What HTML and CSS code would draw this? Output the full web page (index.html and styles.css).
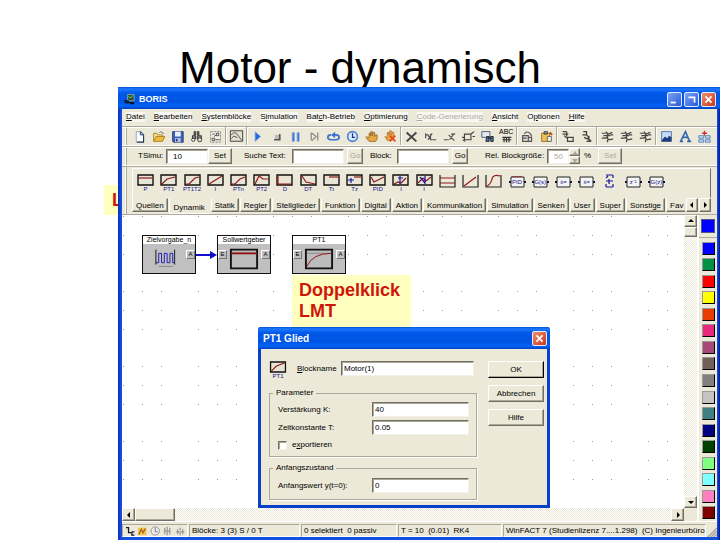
FILE: index.html
```
<!DOCTYPE html>
<html lang="de">
<head>
<meta charset="utf-8">
<title>Motor - dynamisch</title>
<link rel="stylesheet" href="styles.css">
</head>
<body>
<svg class="defs" aria-hidden="true">
  <symbol id="new" viewBox="0 0 16 16"><path d="M4 2h5l4 4v9H4z" fill="#fff" stroke="#8a9ab8"/><path d="M9 2l4 4v9H5" fill="none" stroke="#203860" stroke-width="1.4"/><path d="M9 2v4h4" fill="#9cc0e8" stroke="#203860"/></symbol>
  <symbol id="open" viewBox="0 0 16 16"><path d="M2 14V4h4l1 2h6v3" fill="#f8e080" stroke="#a07820"/><path d="M2 14l3-6h11l-3 6z" fill="#f0bc40" stroke="#a07820"/><path d="M9 3q4-2 5 2" fill="none" stroke="#555"/></symbol>
  <symbol id="save" viewBox="0 0 16 16"><path d="M2 2h13v13H3l-1-1z" fill="#4060b8" stroke="#203070"/><path d="M5 2h7v6H5z" fill="#e8f0ff"/><path d="M5 10h7v5H5z" fill="#b8c4dc"/><path d="M6 11h2v3H6z" fill="#203070"/></symbol>
  <symbol id="find" viewBox="0 0 16 16"><path d="M5 2h2v4H5zM9 2h2v4H9zM3 7h4v4H3zM9 7h5v4H9z" fill="#888" stroke="#222"/><circle cx="4" cy="12" r="2" fill="#fff" stroke="#222"/><circle cx="12" cy="12" r="2.5" fill="#ddd" stroke="#222"/></symbol>
  <symbol id="props" viewBox="0 0 16 16"><path d="M2 2h12v13H2z" fill="#f4f2e8" stroke="#777" stroke-dasharray="3 1"/><path d="M4 5h3M9 4h3v3H9zM4 10h3v3H4zM8 12h5M6 8l3-2" fill="none" stroke="#333"/></symbol>
  <symbol id="scope" viewBox="0 0 16 16"><path d="M1 2h14v12H1z" fill="#e4e1d0" stroke="#333"/><path d="M2 7l3-3 3 1 6 8M2 11l3-3 4 2" fill="none" stroke="#444"/></symbol>
  <symbol id="play" viewBox="0 0 16 16"><path d="M5 2l7 6-7 6z" fill="#2868d8" stroke="#88b0f0"/></symbol>
  <symbol id="stop" viewBox="0 0 16 16"><path d="M6 6h6v6H6z" fill="#bbb"/><path d="M5 12h7V5" fill="none" stroke="#555" stroke-width="2"/></symbol>
  <symbol id="pause" viewBox="0 0 16 16"><path d="M5 3v11M11 3v11" stroke="#6898e8" stroke-width="3"/><path d="M6 3v11M12 3v11" stroke="#2858c0"/></symbol>
  <symbol id="step" viewBox="0 0 16 16"><path d="M4 3v10M12 3v10M5 4l5 4-5 5" fill="none" stroke="#888" stroke-width="1.5"/></symbol>
  <symbol id="loop" viewBox="0 0 16 16"><path d="M5 6Q1 6 1 9t4 3h6q4 0 4-3t-4-3H7" fill="none" stroke="#3870d0" stroke-width="2"/><path d="M10 2v8L5 6z" fill="#3870d0"/></symbol>
  <symbol id="clock" viewBox="0 0 16 16"><circle cx="8" cy="8" r="6" fill="#d8e8ff" stroke="#5080d0" stroke-width="2"/><path d="M8 4v5h3" fill="none" stroke="#203880" stroke-width="1.5"/></symbol>
  <symbol id="hand" viewBox="0 0 16 16"><path d="M5 14L1 9l1-1 3 2V4h2v3V2h2v5l1-4h2v5l1-2h2v5l-2 3z" fill="#e8a840" stroke="#704010" stroke-width=".7"/></symbol>
  <symbol id="handx" viewBox="0 0 16 16"><path d="M4 13L1 8l3 1V3h2v3l1-5h2v5l2-4 1 1v9z" fill="#e8a840" stroke="#a05818" stroke-width=".7"/><path d="M7 7l7 7M14 7l-7 7" stroke="#e04818" stroke-width="2"/></symbol>
  <symbol id="cross" viewBox="0 0 16 16"><path d="M2 3l12 11M14 3L2 14" stroke="#444" stroke-width="2.4"/></symbol>
  <symbol id="wirel" viewBox="0 0 16 16"><path d="M2 4v6M2 6h3l3 6M5 12l5-8M8 5v7h7" fill="none" stroke="#555" stroke-width="1.5"/></symbol>
  <symbol id="wirer" viewBox="0 0 16 16"><path d="M1 12h6M7 6l7 7M14 4L8 12M10 5h5" fill="none" stroke="#555" stroke-width="1.5"/></symbol>
  <symbol id="replace" viewBox="0 0 16 16"><path d="M3 5h8v7H3zM11 5l4-3M13 8h3M0 9h3M4 14l-3-2" fill="none" stroke="#444" stroke-width="1.4"/></symbol>
  <symbol id="findb" viewBox="0 0 16 16"><path d="M1 2h10v7H1z" fill="#e8e8f4" stroke="#345"/><path d="M7 8h3v6H6zM12 8h3v6h-3z" fill="#4878b8" stroke="#111"/><path d="M8 10h5" stroke="#111"/></symbol>
  <symbol id="abc" viewBox="0 0 16 16"><path d="M3 9h11M5 9v6M8 9v6M11 9v6M3 12h11" stroke="#333" stroke-width="1.5"/></symbol>
  <symbol id="copy" viewBox="0 0 16 16"><path d="M2 7h7v7H2zM9 9h4v5H9z" fill="#ddd" stroke="#555" stroke-width="1.4"/><path d="M4 5q3-5 8 0l1 3M2 10h5" fill="none" stroke="#555" stroke-width="1.4"/></symbol>
  <symbol id="paste" viewBox="0 0 16 16"><path d="M2 4h10v10H2z" fill="#f0c050" stroke="#906010"/><path d="M5 2h4v3H5z" fill="#999" stroke="#333"/><path d="M9 8h5v6H9z" fill="#eee" stroke="#555"/><path d="M12 3l3 3" stroke="#c04020" stroke-width="2"/></symbol>
  <symbol id="group" viewBox="0 0 16 16"><path d="M2 2h5M2 5h7M7 2v6M4 7l3 3M8 9h7v5H8z" fill="none" stroke="#444" stroke-width="1.5"/></symbol>
  <symbol id="ungroup" viewBox="0 0 16 16"><path d="M4 2h4v4H3M8 6l3 3M5 9l4 2 2-2v5M8 14h5M10 10l4 4" fill="none" stroke="#444" stroke-width="1.6"/></symbol>
  <symbol id="net" viewBox="0 0 16 16"><path d="M1 4h6M6 2l3 3 5-2M3 7h8M8 5v5M1 10h5M6 9l4 3 5-1M8 12v3M11 6h4" fill="none" stroke="#444" stroke-width="1.5"/></symbol>
  <symbol id="image" viewBox="0 0 16 16"><path d="M2 2h12v12H2z" fill="#c8dcf8" stroke="#4060a0"/><path d="M2 13l4-5 3 2 2-3 3 2v5H2z" fill="#203c78"/></symbol>
  <symbol id="font" viewBox="0 0 16 16"><path d="M2 14L8 2l5 12M5 9h6M1 14h4M10 14h5" fill="none" stroke="#3868b0" stroke-width="2"/></symbol>
  <symbol id="insert" viewBox="0 0 16 16"><path d="M1 7h6v3H1zM9 7h6v3H9zM1 12h6v3H1zM9 12h6v3H9z" fill="#c8dcf8" stroke="#4878b0"/><path d="M8 1v6M5 4h6" stroke="#d03030" stroke-width="1.6"/></symbol>
  <symbol id="frame" viewBox="0 0 17 12"><path d="M1 1h15v10H1z" fill="#e8e5d6" stroke="#111" stroke-width="1.4"/></symbol>
  <symbol id="xbox" viewBox="0 0 17 12"><path d="M2 1h13v10H2z" fill="#f4f4f4" stroke="#222"/><path d="M0 6h2M15 6h2" stroke="#113" stroke-width="2"/></symbol>
</svg>

<main class="slide">
  <h1>Motor - dynamisch</h1>
  <p class="callout callout-left">L</p>

  <section class="window" aria-label="BORIS">
    <header class="titlebar">
      <svg class="app-icon" viewBox="0 0 12 12"><path d="M4 1h7v7H4z" fill="#2c5038" stroke="#8aa"/><path d="M5 3l2 2 3-3" fill="none" stroke="#6e6"/><path d="M0 8h4l2 2h5M1 10h4M7 11h4" stroke="#111" stroke-width="1.5" fill="none"/></svg>
      <span>BORIS</span>
      <div class="controls">
        <button class="ctl" aria-label="Minimieren"><svg viewBox="0 0 15 15"><path d="M3 11h6" stroke="#fff" stroke-width="2"/></svg></button>
        <button class="ctl" aria-label="Maximieren"><svg viewBox="0 0 15 15"><path d="M4 5h7v6" fill="none" stroke="#fff" stroke-width="2"/></svg></button>
        <button class="ctl close" aria-label="Schließen"><svg viewBox="0 0 15 15"><path d="M4 4l7 7M11 4l-7 7" stroke="#fff" stroke-width="2"/></svg></button>
      </div>
    </header>

    <nav class="menu">
      <button><u>D</u>atei</button><button><u>B</u>earbeiten</button><button><u>S</u>ystemblöcke</button><button>S<u>i</u>mulation</button><button>Bat<u>c</u>h-Betrieb</button><button><u>O</u>ptimierung</button><button disabled><u>C</u>ode-Generierung</button><button><u>A</u>nsicht</button><button>O<u>p</u>tionen</button><button><u>H</u>ilfe</button>
    </nav>

    <div class="toolbar">
      <button aria-label="Neu"><svg><use href="#new"/></svg></button><button aria-label="Öffnen"><svg><use href="#open"/></svg></button><button aria-label="Speichern"><svg><use href="#save"/></svg></button><button aria-label="Suchen"><svg><use href="#find"/></svg></button><button aria-label="Eigenschaften"><svg><use href="#props"/></svg></button>
      <i></i><button class="boxed" aria-label="Oszilloskop"><svg><use href="#scope"/></svg></button><i></i>
      <button aria-label="Start"><svg><use href="#play"/></svg></button><button aria-label="Stopp"><svg><use href="#stop"/></svg></button><button aria-label="Pause"><svg><use href="#pause"/></svg></button><button aria-label="Schritt"><svg><use href="#step"/></svg></button><button aria-label="Schleife"><svg><use href="#loop"/></svg></button><button aria-label="Zeit"><svg><use href="#clock"/></svg></button><button aria-label="Anhalten"><svg><use href="#hand"/></svg></button><button aria-label="Anhalten aus"><svg><use href="#handx"/></svg></button>
      <i></i>
      <button aria-label="Löschen"><svg><use href="#cross"/></svg></button><button aria-label="Verbindung links"><svg><use href="#wirel"/></svg></button><button aria-label="Verbindung rechts"><svg><use href="#wirer"/></svg></button><button aria-label="Ersetzen"><svg><use href="#replace"/></svg></button><button aria-label="Block suchen"><svg><use href="#findb"/></svg></button><button class="abc"><span>ABC</span><svg><use href="#abc"/></svg></button>
      <i></i>
      <button aria-label="Kopieren"><svg><use href="#copy"/></svg></button><button aria-label="Einfügen"><svg><use href="#paste"/></svg></button>
      <i></i>
      <button aria-label="Gruppieren"><svg><use href="#group"/></svg></button><button aria-label="Gruppe lösen"><svg><use href="#ungroup"/></svg></button>
      <i></i>
      <button aria-label="Netz 1"><svg><use href="#net"/></svg></button><button aria-label="Netz 2"><svg><use href="#net"/></svg></button><button aria-label="Netz 3"><svg><use href="#net"/></svg></button>
      <i></i>
      <button aria-label="Bild"><svg><use href="#image"/></svg></button><button aria-label="Text"><svg><use href="#font"/></svg></button><button aria-label="Hinzufügen"><svg><use href="#insert"/></svg></button>
    </div>

    <div class="toolbar fields">
      <label class="c1" for="tsimu">TSimu:</label><input id="tsimu" class="w42" value="10"><button class="btn set">Set</button>
      <label class="c2" for="suche">Suche Text:</label><input id="suche" class="w52"><button class="btn go" disabled>Go</button>
      <label class="c3" for="block">Block:</label><input id="block" class="w52"><button class="btn go">Go</button>
      <label class="c4" for="rel">Rel. Blockgröße:</label><input id="rel" class="w24" value="50" disabled><span class="spin"><button class="btn" aria-label="Mehr" disabled><svg viewBox="0 0 8 8"><path d="M1 6h6L4 2z"/></svg></button><button class="btn" aria-label="Weniger" disabled><svg viewBox="0 0 8 8"><path d="M1 2h6L4 6z"/></svg></button></span><span class="pct">%</span><button class="btn set" disabled>Set</button>
    </div>

    <div class="library">
      <div class="blocks">
        <span><svg viewBox="0 0 17 12"><use href="#frame"/><path d="M2 4h13" class="r"/></svg>P</span>
        <span><svg viewBox="0 0 17 12"><use href="#frame"/><path d="M2 10l5-5 8-2" class="r"/></svg>PT1</span>
        <span><svg viewBox="0 0 17 12"><use href="#frame"/><path d="M2 10h3l6-6 4-1" class="r"/></svg>PT1T2</span>
        <span><svg viewBox="0 0 17 12"><use href="#frame"/><path d="M2 10L15 2" class="r"/></svg>I</span>
        <span><svg viewBox="0 0 17 12"><use href="#frame"/><path d="M2 10h3l5-5 5-2" class="r"/></svg>PTn</span>
        <span><svg viewBox="0 0 17 12"><use href="#frame"/><path d="M2 10l4-8 4 3 5 0" class="r"/></svg>PT2</span>
        <span><svg viewBox="0 0 17 12"><use href="#frame"/><path d="M2 2v8h13" class="r"/></svg>D</span>
        <span><svg viewBox="0 0 17 12"><use href="#frame"/><path d="M2 2l4 6 9 2" class="r"/></svg>DT</span>
        <span><svg viewBox="0 0 17 12"><use href="#frame"/><path d="M6 3h9" class="r"/></svg>Tt</span>
        <span><svg viewBox="0 0 17 12"><use href="#frame"/><path d="M8 3h7" class="r"/><path d="M2 6h6M5 4v5" class="b"/></svg>Tz</span>
        <span><svg viewBox="0 0 17 12"><use href="#frame"/><path d="M2 3l3 5 10-5" class="r"/></svg>PID</span>
        <span><svg viewBox="0 0 17 12"><use href="#frame"/><path d="M2 10l4-2 3 1 5-5" class="r"/><path d="M8 2v8M6 4h5" class="b"/></svg>I</span>
        <span><svg viewBox="0 0 17 12"><use href="#frame"/><path d="M2 9l5-5 3 3 5-4" class="r"/><path d="M4 3l5 6M9 2v8" class="b"/></svg>I</span>
        <span class="tall"><svg viewBox="0 0 17 14"><path d="M1 1v12h15V1" class="k"/><path d="M1 4h15M1 9h15" class="r"/></svg></span>
        <span class="tall"><svg viewBox="0 0 17 14"><path d="M1 1v12h15V1" class="k"/><path d="M2 12L14 3" class="r"/></svg></span>
        <span class="tall"><svg viewBox="0 0 17 14"><path d="M1 1v12h15V1" class="k"/><path d="M2 12q4-2 5-7t8-3" class="r"/></svg></span>
        <span class="tall fx"><svg viewBox="0 0 17 12"><use href="#xbox"/><path d="M3 0h10" class="r"/></svg><b>PID</b></span>
        <span class="tall fx"><svg viewBox="0 0 17 12"><use href="#xbox"/></svg><b>G(s)</b></span>
        <span class="tall fx"><svg viewBox="0 0 17 12"><use href="#xbox"/></svg><b>ẋ=</b></span>
        <span class="tall fx"><svg viewBox="0 0 17 12"><use href="#xbox"/></svg><b>ẋ=</b></span>
        <span class="tall"><svg viewBox="0 0 17 14"><path d="M5 1h7M5 4l2-2M8 5v5M5 7h7M5 13h7M5 10v3M12 1v3M12 10v3" class="b"/></svg></span>
        <span class="tall fx"><svg viewBox="0 0 17 12"><use href="#xbox"/></svg><b>z⁻¹</b></span>
        <span class="tall fx"><svg viewBox="0 0 17 12"><use href="#xbox"/></svg><b>G(z)</b></span>
      </div>
      <div class="tabs">
        <button>Quellen</button><button class="active">Dynamik</button><button>Statik</button><button>Regler</button><button>Stellglieder</button><button>Funktion</button><button>Digital</button><button>Aktion</button><button>Kommunikation</button><button>Simulation</button><button>Senken</button><button>User</button><button>Super</button><button>Sonstige</button><button class="last">Fav</button>
        <span class="tabnav"><button class="btn" aria-label="Zurück"><svg viewBox="0 0 8 8"><path d="M5 1v6L2 4z"/></svg></button><button class="btn" aria-label="Weiter"><svg viewBox="0 0 8 8"><path d="M3 1v6l3-3z"/></svg></button></span>
      </div>
    </div>

    <div class="work">
      <div class="sheet">
        <div class="canvas">
          <svg class="dots"><defs><pattern id="grid" width="75" height="75" patternUnits="userSpaceOnUse"><path d="M1 1h1v1h-1zM20 1h1v1h-1zM39 1h1v1h-1zM1 20h1v1h-1zM20 20h1v1h-1zM39 20h1v1h-1zM1 39h1v1h-1zM20 39h1v1h-1zM39 39h1v1h-1z" fill="#999"/></pattern></defs><rect width="100%" height="100%" fill="url(#grid)"/></svg>
          <svg class="arrow" viewBox="0 0 21 8"><path d="M0 4h15" stroke="#1010c8" stroke-width="2"/><path d="M14 0l7 4-7 4z" fill="#1010c8"/></svg>
          <div class="node n1"><b>Zielvorgabe_n</b><svg viewBox="0 0 54 31"><path d="M13 6v16M33 6v16" stroke="#111"/><path d="M16 24h15" stroke="#888"/><path d="M13 20h3V10h3v10h3V10h3v10h3V10h3v10h2" fill="none" stroke="#1818b0"/></svg><i class="out">A</i></div>
          <div class="node n2"><b>Sollwertgeber</b><svg viewBox="0 0 54 31"><path d="M13 6h28v20H13z" fill="#bcbcbc" stroke="#111" stroke-width="2"/><path d="M14 10h27" stroke="#901010" stroke-width="2"/></svg><i class="in">E</i><i class="out">A</i></div>
          <div class="node n3"><b>PT1</b><svg viewBox="0 0 54 31"><path d="M13 6h28v20H13z" fill="#bcbcbc" stroke="#111" stroke-width="2"/><path d="M14 10h26" stroke="#888"/><path d="M14 24Q20 10 40 10" fill="none" stroke="#901010"/></svg><i class="in">E</i><i class="out">A</i></div>
        </div>
        <div class="vscroll"><button class="btn" aria-label="Nach oben"><svg viewBox="0 0 8 8"><path d="M1 5h6L4 2z"/></svg></button><span class="btn thumb"></span><button class="btn end" aria-label="Nach unten"><svg viewBox="0 0 8 8"><path d="M1 3h6L4 6z"/></svg></button></div>
        <div class="hscroll"><button class="btn" aria-label="Nach links"><svg viewBox="0 0 8 8"><path d="M5 1v6L2 4z"/></svg></button><span class="btn thumb"></span><button class="btn end" aria-label="Nach rechts"><svg viewBox="0 0 8 8"><path d="M3 1v6l3-3z"/></svg></button></div>
      </div>
      <aside class="colors">
        <div class="current"></div>
        <ul><li class="k1"></li><li class="k2"></li><li class="k3"></li><li class="k4"></li><li class="k5"></li><li class="k6"></li><li class="k7"></li><li class="k8"></li><li class="k9"></li><li class="k10"></li><li class="k11"></li><li class="k12"></li><li class="k13"></li><li class="k14"></li><li class="k15"></li><li class="k16"></li><li class="k17"></li></ul>
      </aside>
    </div>

    <footer class="status">
      <span class="s-icons"><svg viewBox="0 0 12 12"><path d="M1 2h3v6h3M8 7h3M8 7v4h3" fill="none" stroke="#113" stroke-width="1.5"/></svg><svg viewBox="0 0 12 12"><path d="M1 2h10v9H1z" fill="#f0c050"/><path d="M2 10l3-6 2 4 3-5" fill="none" stroke="#a06010" stroke-width="1.5"/></svg><svg viewBox="0 0 12 12"><circle cx="6" cy="6" r="5" fill="#eee" stroke="#888"/><path d="M6 2v5h3" fill="none" stroke="#666"/></svg><svg viewBox="0 0 12 12"><path d="M2 6h8M3 2v8M6 1v10M9 2v8" stroke="#999" stroke-width="1.5"/></svg><svg viewBox="0 0 12 12"><path d="M1 7h10M3 4v6M6 2v3M6 8v3M9 4v6" stroke="#999" stroke-width="1.5"/></svg></span>
      <span>Blöcke: 3 (3) S / 0 T</span>
      <span>0 selektiert&nbsp; 0 passiv</span>
      <span>T = 10&nbsp; (0.01)&nbsp; RK4</span>
      <span>WinFACT 7 (Studienlizenz 7....1.298)&nbsp; (C) Ingenieurbüro</span>
      <svg class="sizer" viewBox="0 0 10 10"><path d="M1 10l9-9M4 10l6-6M7 10l3-3" stroke="#aaa69a" stroke-width="1.5"/></svg>
    </footer>
  </section>

  <p class="callout callout-main">Doppelklick LMT</p>

  <form class="dialog" aria-label="PT1 Glied">
    <header class="titlebar"><span>PT1 Glied</span>
      <div class="controls"><button type="button" class="ctl close" aria-label="Schließen"><svg viewBox="0 0 15 15"><path d="M4 4l7 7M11 4l-7 7" stroke="#fff" stroke-width="2"/></svg></button></div>
    </header>
    <div class="body">
      <div class="form">
        <div class="name-row">
          <span class="pt1"><svg viewBox="0 0 17 12"><use href="#frame"/><path d="M2 10l5-5 8-3" class="r"/></svg>PT1</span>
          <label for="name"><u>B</u>lockname</label><input id="name" value="Motor(1)">
        </div>
        <fieldset>
          <legend>Parameter</legend>
          <div class="row"><label for="k">Verstärkung K:</label><input id="k" value="40"></div>
          <div class="row"><label for="t">Zeitkonstante T:</label><input id="t" value="0.05"></div>
          <label class="check"><input type="checkbox"><span>e<u>x</u>portieren</span></label>
        </fieldset>
        <fieldset class="initial">
          <legend>Anfangszustand</legend>
          <div class="row"><label for="y">Anfangswert y(t=0):</label><input id="y" value="0"></div>
        </fieldset>
      </div>
      <div class="actions"><button type="button" class="btn ok">OK</button><button type="button" class="btn">Abbrechen</button><button type="button" class="btn">Hilfe</button></div>
    </div>
  </form>
</main>
</body>
</html>
```
FILE: styles.css
```
* { box-sizing: border-box; }
body { margin: 0; background: #fff; color: #000; font: 8px/10px "Liberation Sans", Arial, sans-serif; }
button, input { font: inherit; color: inherit; margin: 0; padding: 0; }
button { border: 0; background: none; white-space: nowrap; }
button svg { display: block; }
.defs { position: absolute; width: 0; height: 0; }

.slide { position: relative; display: flex; flex-direction: column; min-height: 100vh; overflow: hidden; }
h1 { height: 87px; margin: 0; padding-top: 43px; font-size: 44px; line-height: 50px; font-weight: 400; text-align: center; }

.callout { position: absolute; margin: 0; padding: 5px 7px; background: #ffffc0; color: #d01408; font-size: 18px; line-height: 21px; font-weight: 700; }
.callout-left { left: 104px; top: 185px; padding: 5px 8px; line-height: 20px; }
.callout-main { left: 292px; top: 275px; width: 119px; height: 53px; }

.window { position: relative; flex: 1; display: flex; flex-direction: column; margin-left: 118px; padding: 0 3px 3px 4px; background: linear-gradient(90deg, #0a28b8, #1450e0 3px, #1450e0 calc(100% - 3px), #0018a0); }
.window > * { background: #ece9d8; }
.titlebar { display: flex; align-items: center; gap: 4px; height: 22px; color: #fff; font-size: 10px; font-weight: 700; background: linear-gradient(#0a50d0, #1c78ff 2px, #0058e8 6px, #0054e4 15px, #0064f8 19px, #0040c0); }
.window > .titlebar { margin: 0 -3px 0 -4px; padding: 2px 4px 0 6px; font-size: 9px; background: linear-gradient(#0a50d0, #1c78ff 2px, #0058e8 6px, #0054e4 15px, #0064f8 19px, #0040c0); }
.app-icon { width: 11px; height: 12px; }
.controls { display: flex; gap: 2px; margin-left: auto; }
.ctl { width: 15px; height: 15px; border: 1px solid #e4ecff; border-radius: 2px; background: linear-gradient(135deg, #7ca4f8, #2858d8); }
.ctl svg { width: 13px; height: 13px; }
.close { background: linear-gradient(135deg, #f09070, #c83818); }

.menu { display: flex; align-items: center; gap: 9px; height: 17px; padding: 0 4px 2px; }
.menu button { background: #f8f7f2; }
button:disabled, input:disabled { color: #aca899; fill: #aca899; }

.toolbar { display: flex; align-items: center; height: 20px; padding-left: 8px; border-top: 1px solid #aca899; border-bottom: 1px solid #fff; box-shadow: inset 0 1px #fff; background-image: linear-gradient(90deg, transparent 3px, #fff 3px, #fff 4px, #aca899 4px, #aca899 5px, transparent 5px); }
.toolbar > button:not(.btn) { width: 19px; flex: none; }
.toolbar > button svg { width: 13px; height: 13px; margin: auto; }
.toolbar i { width: 2px; height: 18px; border-left: 1px solid #aca899; border-right: 1px solid #fff; }
.toolbar > .boxed svg { width: 15px; height: 14px; }
.abc { position: relative; }
.abc span { position: absolute; left: 2px; top: -3px; font-size: 7px; }

.btn { background: #ece9d8; border: 1px solid; border-color: #fff #716f64 #716f64 #fff; box-shadow: inset -1px -1px #aca899; }
input { min-width: 0; background: #fff; border: 1px solid; border-color: #716f64 #f4f2e8 #f4f2e8 #716f64; box-shadow: inset 1px 1px #aca899; padding: 0 2px; height: 15px; border-radius: 0; }
.fields { padding-left: 16px; }
.fields input { padding-left: 6px; }
.fields label { white-space: nowrap; flex: none; }
.c1 { width: 28px; } .c2 { width: 48px; margin-left: 12px; } .c3 { width: 27px; margin-left: 7px; } .c4 { width: 62px; margin-left: 17px; }
.w42 { width: 42px; } .w52 { width: 52px; } .w24 { width: 22px; }
.set { width: 24px; height: 16px; }
.go { width: 16px; height: 16px; margin-left: 3px; }
.spin { display: flex; flex-direction: column; width: 11px; }
.spin button { height: 8px; }
.spin svg { width: 5px; height: 5px; }
.pct { margin: 0 7px 0 4px; }

.library { height: 49px; padding: 1px 6px 0 10px; border-top: 1px solid #aca899; border-bottom: 1px solid #aca899; background-image: linear-gradient(90deg, transparent 3px, #fff 3px, #fff 4px, #aca899 4px, #aca899 5px, transparent 5px); }
.blocks { display: grid; grid-template-columns: repeat(23, 1fr); height: 30px; padding: 5px 42px 0 1px; border: 1px solid; border-color: #fff #716f64 #ece9d8 #fff; }
.blocks span { position: relative; display: flex; flex-direction: column; align-items: center; font-size: 6px; line-height: 6px; color: #101088; }
.blocks svg { width: 17px; height: 12px; flex: none; }
.blocks .tall svg { height: 14px; }
.blocks .fx svg { height: 12px; margin-top: 2px; }
.fx b { position: absolute; top: 5px; font-weight: 400; }
.r, .b, .k { fill: none; stroke: #901818; stroke-width: 1.2; }
.b { stroke: #1818a0; }
.k { stroke: #222; }

.tabs { display: flex; height: 16px; gap: 1px; }
.tabs > button { height: 14px; padding: 1px 3px 0; border: 1px solid; border-color: #ece9d8 #716f64 #716f64 #fff; box-shadow: inset -1px -1px #aca899; flex: none; }
.tabs > .active { height: 16px; padding: 3px 4px 0; border-color: #ece9d8 #ece9d8 #fff #fff; box-shadow: none; }
.tabs > .last { flex: 1 0 auto; text-align: left; padding-right: 0; border-right: 0; box-shadow: inset 0 -1px #aca899; }
.tabnav { display: flex; gap: 1px; }
.tabnav .btn { width: 12px; height: 14px; }
.btn svg { width: 8px; height: 8px; margin: auto; }

.work { flex: 1; display: flex; }
.sheet { flex: 1; display: grid; grid-template: 1fr 13px / 1fr 13px; }
.canvas { position: relative; background: #fff; }
.dots { position: absolute; width: 100%; height: 100%; }
.arrow { position: absolute; left: 74px; top: 36px; width: 21px; height: 8px; }
.node { position: absolute; top: 20px; width: 54px; height: 39px; border: 1px solid #111; background: #c0c0c0; text-align: center; }
.n1 { left: 20px; } .n2 { left: 95px; } .n3 { left: 170px; }
.node b { display: block; height: 8px; background: #fff; font-size: 7px; line-height: 8px; font-weight: 400; }
.node svg { display: block; width: 52px; height: 29px; }
.node i { position: absolute; top: 14px; width: 9px; height: 9px; border: 1px solid; border-color: #fff #777 #777 #fff; font-size: 6px; line-height: 7px; font-style: normal; }
.in { left: 0; } .out { right: 0; }
.vscroll, .hscroll { display: flex; background: repeating-conic-gradient(#fff 0 25%, #ece9d8 0 50%) 0 0 / 2px 2px; }
.vscroll { flex-direction: column; }
.vscroll .btn { height: 12px; }
.vscroll .thumb { height: 10px; }
.hscroll .btn { width: 13px; }
.hscroll .thumb { width: 40px; }
.vscroll .end { margin-top: auto; }
.hscroll .end { margin-left: auto; }

.colors { width: 20px; display: flex; flex-direction: column; border-left: 2px solid #fff; }
.current { width: 14px; height: 14px; margin: 4px 2px; background: #00f; border: 1px solid #558; }
.colors ul { flex: 1; display: flex; flex-direction: column; margin: 0; padding: 2px 0 0; list-style: none; border-top: 1px solid #aca899; }
.colors li { flex: 1; display: flex; align-items: center; justify-content: center; }
.colors li::before { content: ""; width: 11px; height: 11px; background: var(--c); border: 1px solid; border-color: #999 #000 #000 #999; }
.k1 { --c: #00f; } .k2 { --c: #009048; } .k3 { --c: #f00; } .k4 { --c: #ff0; } .k5 { --c: #e83c00; } .k6 { --c: #e8287c; }
.k7 { --c: #a84878; } .k8 { --c: #706058; } .k9 { --c: #808080; } .k10 { --c: #c4c4c4; } .k11 { --c: #408080; } .k12 { --c: #000080; }
.k13 { --c: #004000; } .k14 { --c: #80ff80; } .k15 { --c: #80ffff; } .k16 { --c: #ff80c0; } .k17 { --c: #800000; }

.status { display: grid; grid-template-columns: 66px 111px 96px 104px minmax(0, 1fr) 10px; gap: 1px; height: 16px; padding-top: 2px; border-top: 1px solid #fff; }
.status span { padding: 1px 2px; border: 1px solid; border-color: #aca899 #fff #fff #aca899; white-space: nowrap; overflow: hidden; }
.s-icons { display: flex; gap: 2px; }
.s-icons svg { width: 11px; height: 10px; }
.sizer { width: 10px; height: 10px; align-self: end; }

.dialog { position: absolute; left: 258px; top: 327px; width: 292px; border: 3px solid #0840c8; border-top: 0; border-radius: 3px 3px 0 0; background: #ece9d8; }
.dialog .titlebar { margin: 0 -3px; padding: 1px 3px 0 5px; border-radius: 3px 3px 0 0; }
.body { display: flex; gap: 11px; padding: 12px 3px 5px 8px; }
.form { flex: 1; }
.name-row { display: flex; height: 17px; padding-right: 3px; }
.pt1 { width: 18px; font-size: 6px; line-height: 6px; color: #101088; text-align: center; }
.pt1 svg { display: block; width: 18px; height: 12px; }
.name-row label { width: 54px; padding: 3px 0 0 10px; }
.name-row input { flex: 1; }
fieldset { margin: 10px 0 0; padding: 4px 7px 6px 8px; border: 1px solid #aca899; box-shadow: 1px 1px #fff; }
.initial { margin-top: 6px; padding-top: 5px; }
legend { padding: 0 3px; margin-left: -5px; }
.row { display: flex; align-items: center; margin-bottom: 3px; }
.row label { flex: 1; }
.row input { width: 97px; height: 15px; }
.initial .row { margin: 0; }
.check { display: flex; align-items: center; gap: 5px; padding-top: 2px; }
.check input { appearance: none; width: 9px; height: 9px; padding: 0; }
.actions { display: flex; flex-direction: column; gap: 7px; width: 56px; }
.actions .btn { height: 17px; }
.actions .ok { border-color: #fff #000 #000 #fff; }
```
